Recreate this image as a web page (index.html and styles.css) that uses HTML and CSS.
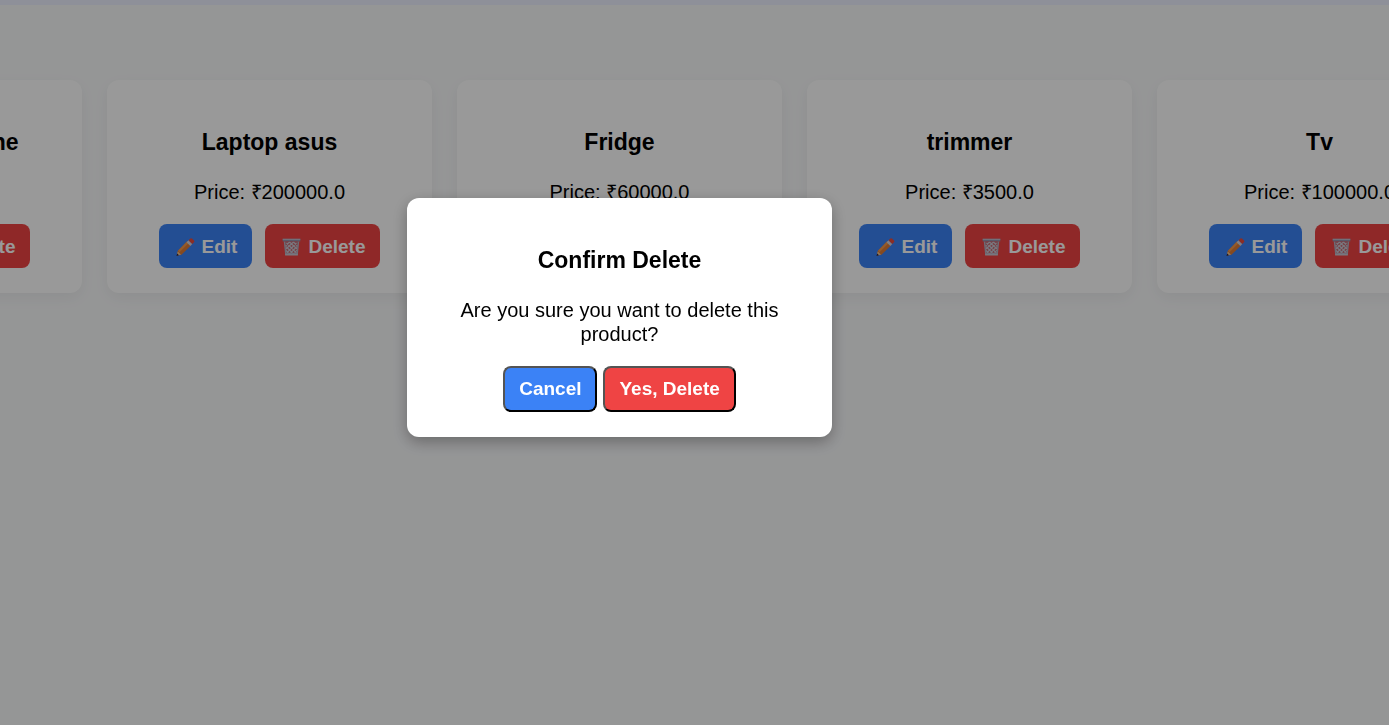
FILE: index.html
```
<!DOCTYPE html>
<html lang="en">
<head>
<meta charset="utf-8">
<meta name="viewport" content="width=device-width, initial-scale=1">
<title>Products</title>
<link rel="stylesheet" href="styles.css">
</head>
<body>
<svg class="sprite" aria-hidden="true">
  <symbol id="pencil" viewBox="0 0 18 18">
    <path d="M1.2 13 10.4 3.6 14.4 7.6 5 16.8 0.4 17.6Z" fill="#e07c34"/>
    <path d="M1.6 12.6 10.4 3.6 12 5.2 3 14.2Z" fill="#f2964a"/>
    <path d="M1.2 13.4 4.6 16.8 0.4 17.6Z" fill="#f0c896"/>
    <path d="M0.7 15.6 2.5 17.3 0 18Z" fill="#28203c"/>
    <path d="M10 4.2 12 2.2 15.8 6 13.8 8Z" fill="#d0d2de"/>
    <path d="M12 2.2 13.8 0.5Q14.6 -0.1 15.5 0.6L17.5 2.6Q18.2 3.4 17.5 4.3L15.8 6Z" fill="#e84c3c"/>
  </symbol>
  <symbol id="bin" viewBox="0 0 18 18">
    <path d="M1.8 3.5H16.2L15 17H3Z" fill="#9b8f9f" fill-opacity=".5"/>
    <path d="M4 5 14 15M7 4 14.5 11M11 4 15 8M3 8 11 16M3 12 7 16M14 5 4 15M11 4 3.5 11M7 4 3 8M15 8 7 16M14.5 12 11 16" stroke="#cbc8d4" stroke-width="1.1" fill="none"/>
    <path d="M2 3.5 3.3 16H14.7L16 3.5" stroke="#b4b3c4" stroke-width="1.4" fill="none"/>
    <path d="M2.6 16.6H15.4" stroke="#c8c7d2" stroke-width="1.8"/>
    <path d="M0.2 0.8H17.8V3.4H0.2Z" fill="#9496b0"/>
    <path d="M0.2 0.8H17.8V1.8H0.2Z" fill="#c6c5d2"/>
  </symbol>
</svg>
<header class="topbar"></header>
<main class="products">
  <article class="card">
    <h3 class="title">Samsung J phone</h3>
    <p class="text">Price: ₹20000.0</p>
    <div class="actions">
      <button class="btn edit" type="button"><svg class="icon"><use href="#pencil"/></svg>Edit</button>
      <button class="btn delete" type="button"><svg class="icon"><use href="#bin"/></svg>Delete</button>
    </div>
  </article>
  <article class="card">
    <h3 class="title">Laptop asus</h3>
    <p class="text">Price: ₹200000.0</p>
    <div class="actions">
      <button class="btn edit" type="button"><svg class="icon"><use href="#pencil"/></svg>Edit</button>
      <button class="btn delete" type="button"><svg class="icon"><use href="#bin"/></svg>Delete</button>
    </div>
  </article>
  <article class="card">
    <h3 class="title">Fridge</h3>
    <p class="text">Price: ₹60000.0</p>
    <div class="actions">
      <button class="btn edit" type="button"><svg class="icon"><use href="#pencil"/></svg>Edit</button>
      <button class="btn delete" type="button"><svg class="icon"><use href="#bin"/></svg>Delete</button>
    </div>
  </article>
  <article class="card">
    <h3 class="title">trimmer</h3>
    <p class="text">Price: ₹3500.0</p>
    <div class="actions">
      <button class="btn edit" type="button"><svg class="icon"><use href="#pencil"/></svg>Edit</button>
      <button class="btn delete" type="button"><svg class="icon"><use href="#bin"/></svg>Delete</button>
    </div>
  </article>
  <article class="card">
    <h3 class="title">Tv</h3>
    <p class="text">Price: ₹100000.0</p>
    <div class="actions">
      <button class="btn edit" type="button"><svg class="icon"><use href="#pencil"/></svg>Edit</button>
      <button class="btn delete" type="button"><svg class="icon"><use href="#bin"/></svg>Delete</button>
    </div>
  </article>
</main>
<div class="overlay">
  <section class="modal" role="dialog" aria-modal="true" aria-labelledby="confirm-title">
    <h3 class="title" id="confirm-title">Confirm Delete</h3>
    <p class="text">Are you sure you want to delete this product?</p>
    <div class="modal-actions">
      <button class="btn edit outlined" type="button">Cancel</button>
      <button class="btn delete outlined" type="button">Yes, Delete</button>
    </div>
  </section>
</div>
</body>
</html>
```

FILE: styles.css
```
* {
  box-sizing: border-box;
}

body {
  margin: 0;
  min-height: 100vh;
  overflow: hidden;
  background: #f9fafb;
  color: #000;
  font-family: "Liberation Sans", Arial, sans-serif;
  font-size: 20px;
  line-height: 24px;
}

.sprite {
  display: none;
}

.topbar {
  height: 5px;
  background: #edf1ff;
}

.products {
  display: flex;
  justify-content: center;
  gap: 25px;
  padding: 75px 150px 75px 0;
}

.card {
  flex: 0 0 325px;
  padding: 25px;
  border-radius: 12px;
  background: #fff;
  box-shadow: 0 5px 15px rgba(0, 0, 0, 0.05);
  text-align: center;
}

.title {
  margin: 24px 0;
  font-size: 23px;
  line-height: 27px;
}

.text {
  margin: 0 0 20px;
}

.actions,
.modal-actions {
  display: flex;
  justify-content: center;
  gap: 13px;
}

.modal-actions {
  gap: 6px;
}

.btn {
  display: flex;
  align-items: center;
  gap: 5px;
  padding: 12px 15px 10px;
  border: 0;
  border-radius: 8px;
  color: #fff;
  font: bold 19px/22px "Liberation Sans", Arial, sans-serif;
  cursor: pointer;
}

.edit {
  background: #3b82f6;
}

.delete {
  background: #ef4444;
}

.outlined {
  padding: 10px 14px;
  border: 2px outset #000;
}

.icon {
  width: 23px;
  height: 18px;
}

/* The dialog is centred over the product row, which leaves the right side free. */
.overlay {
  position: fixed;
  inset: 0;
  padding: 198px 150px 0 0;
  background: rgba(0, 0, 0, 0.4);
}

.modal {
  width: 425px;
  max-width: 100%;
  margin: 0 auto;
  padding: 25px;
  border-radius: 12px;
  background: #fff;
  box-shadow: 0 5px 15px rgba(0, 0, 0, 0.3);
  text-align: center;
}
```
